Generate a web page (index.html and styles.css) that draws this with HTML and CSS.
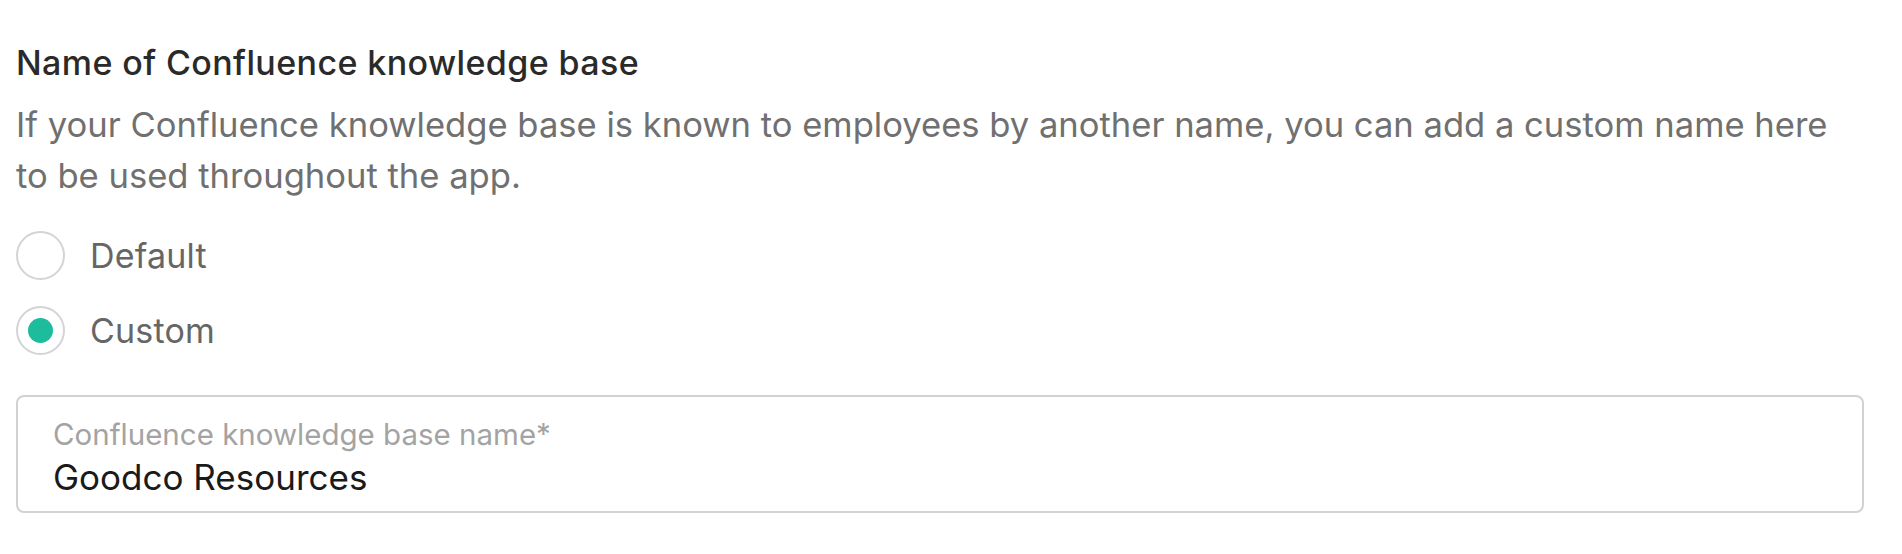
FILE: index.html
```html
<!DOCTYPE html>
<html>
  <head>
    <title>Knowledge base settings</title>
    <link rel="stylesheet" href="styles.css">
  </head>
  <body>
    <div class="section">
      <h2 class="section-title">Name of Confluence knowledge base</h2>
      <p class="section-hint">
        If your Confluence knowledge base is known to employees by another name, you can add a custom name here<br />
        to be used throughout the app.
      </p>

      <div class="options">
        <label class="option">
          <span class="radio"></span>
          <span class="option-text">Default</span>
        </label>
        <label class="option">
          <span class="radio radio-checked"></span>
          <span class="option-text">Custom</span>
        </label>
      </div>

      <div class="field">
        <div class="field-label">Confluence knowledge base name*</div>
        <div class="field-value">Goodco Resources</div>
      </div>
    </div>
  </body>
</html>
```

FILE: styles.css
```css
body {
  font-family: Inter, "Open Sans", sans-serif;
  background-color: #fff;
  margin: 0;
  padding: 43px 38px 0 16px;
}

.section-title {
  margin: 0;
  font-size: 34px;
  font-weight: 500;
  letter-spacing: 0.4px;
  line-height: 40px;
  color: #2a2a2a;
}

.section-hint {
  margin: 16px 0 0;
  font-size: 34.6px;
  line-height: 51px;
  color: #707070;
  white-space: nowrap;
}

.options {
  display: flex;
  flex-direction: column;
  gap: 26px;
  margin-top: 30px;
}

.option {
  display: flex;
  align-items: center;
  gap: 25px;
  font-size: 34px;
  color: #666;
}

.option-text {
  letter-spacing: 0.2px;
}

.radio {
  width: 45px;
  height: 45px;
  border: 2px solid #d4d4d4;
  border-radius: 50%;
  display: flex;
  align-items: center;
  justify-content: center;
  flex-shrink: 0;
}

.radio-checked::after {
  content: "";
  width: 25px;
  height: 25px;
  border-radius: 50%;
  background-color: #1dbc9c;
}

.field {
  margin-top: 40px;
  height: 118px;
  box-sizing: border-box;
  border: 2px solid #d2d2d2;
  border-radius: 8px;
  padding: 19px 35px 0;
}

.field-label {
  font-size: 29.5px;
  line-height: 36px;
  color: #a3a3a3;
}

.field-value {
  margin-top: 4px;
  font-size: 35px;
  line-height: 42px;
  color: #1a1a1a;
}
```
